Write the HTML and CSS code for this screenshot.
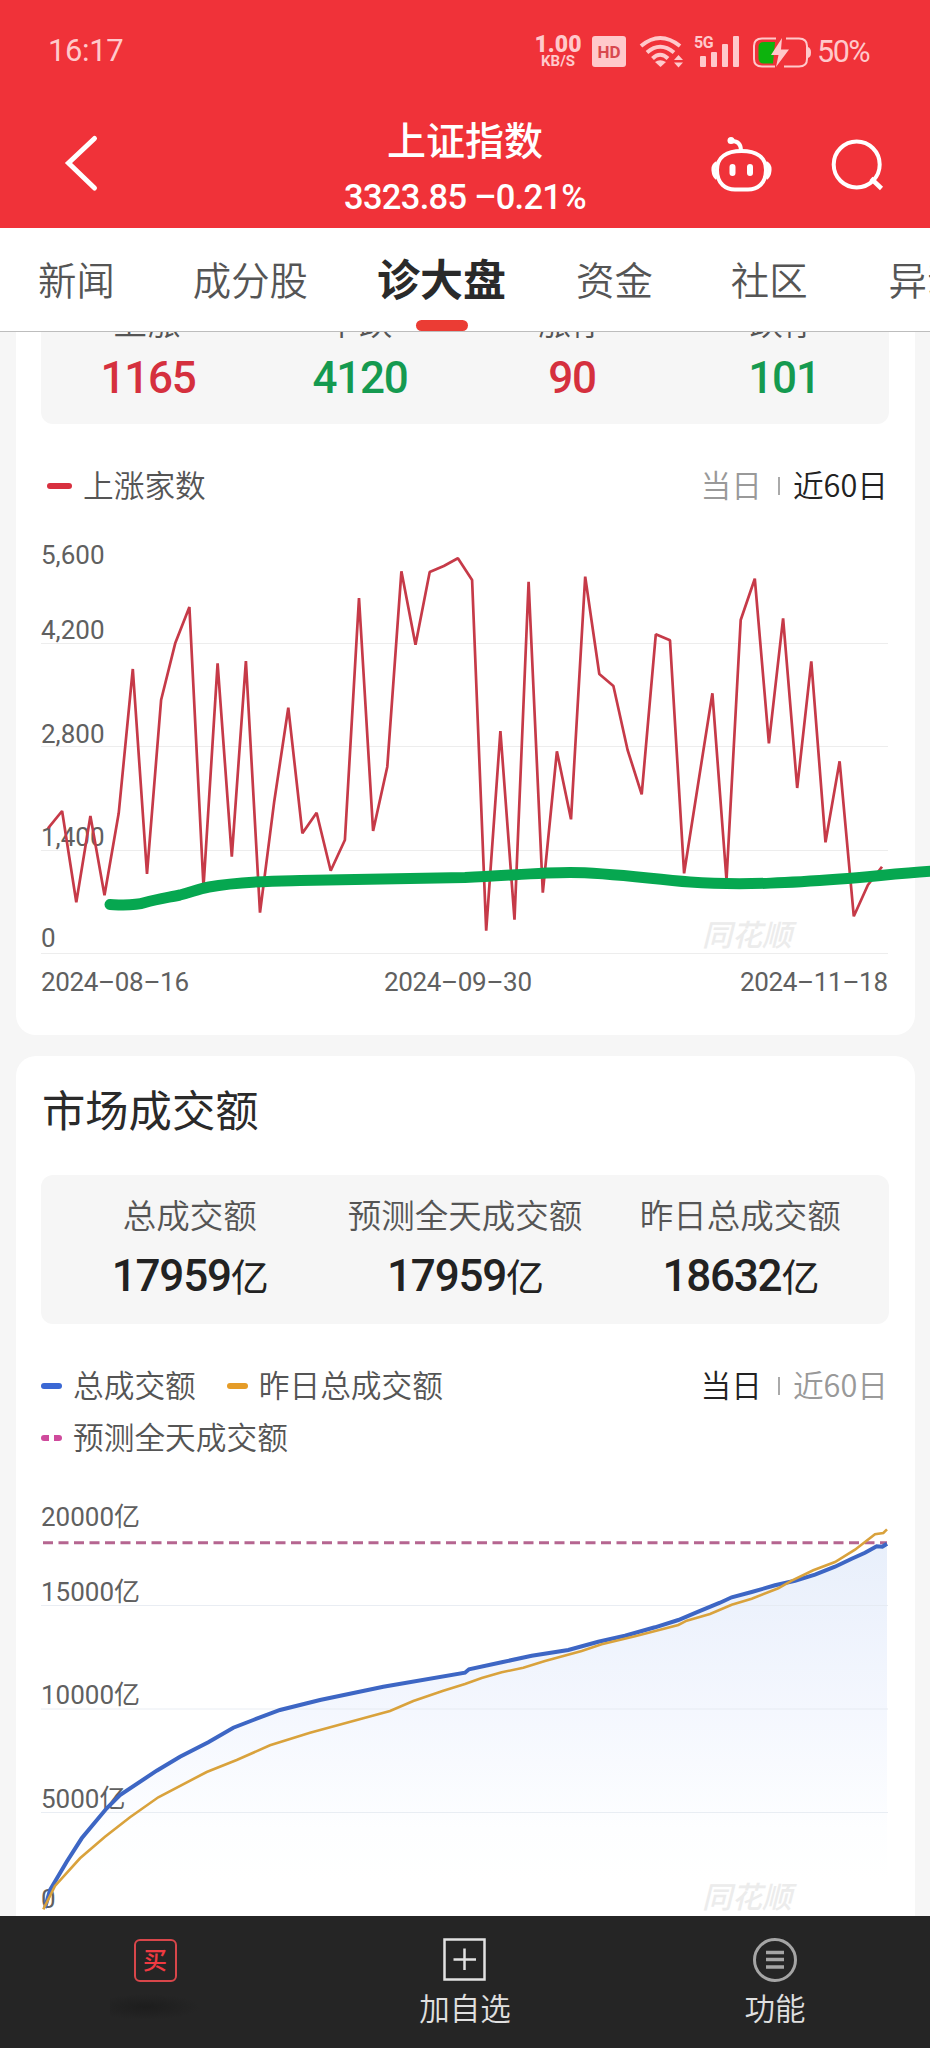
FILE: index.html
```html
<!DOCTYPE html>
<html lang="zh-CN">
<head>
    <meta charset="UTF-8">
    <meta name="viewport" content="width=device-width, initial-scale=1.0">
    <title>上证指数</title>
    <link rel="stylesheet" href="styles.css">
</head>
<body>
    <header>
        <div class="status">
            <span class="time">16:17</span>
            <div class="speed"><b>1.00</b><span>KB/S</span></div>
            <span class="hd">HD</span>
            <svg class="wifi" width="46" height="34" viewBox="638 34 46 34">
                <g fill="none" stroke="#ffc9cb" stroke-width="4">
                    <path d="M641 45Q660 29 680 45"/>
                    <path d="M647 51.5Q660 40 674 51.5"/>
                    <path d="M652.500 57.500Q660 50 668 57.500"/>
                </g>
                <path d="M655 61Q660 57.500 666 61L660.500 66Z" fill="#ffc9cb"/>
                <path d="M674 59L678.500 54L683 59ZM674 61.500L678.500 66.500L683 61.500Z" fill="#ffc9cb"/>
            </svg>
            <div class="signal">
                <span>5G</span>
                <svg width="42" height="34" viewBox="698 34 42 34" fill="#ffc9cb">
                    <rect x="700" y="55" width="6" height="11" rx="1"/>
                    <rect x="711" y="51" width="6" height="15" rx="1"/>
                    <rect x="722" y="43" width="6" height="23" rx="1"/>
                    <rect x="733" y="35" width="6" height="31" rx="1"/>
                </svg>
            </div>
            <svg class="battery" width="60" height="34" viewBox="752 34 60 34">
                <path d="M775 41H764Q758.500 41 758.500 46V57Q758.500 62.500 764 62.500H773Z" fill="#0db30d"/>
                <path d="M776 37.500H762Q754 37.500 754 45V58Q754 65.500 762 65.500H775M786 37.500H799Q807 37.500 807 45V58Q807 65.500 799 65.500H784" fill="none" stroke="#ffc9cb" stroke-width="2"/>
                <path d="M808 46Q811 47 811 51.500T808 57Z" fill="#ffc9cb"/>
                <path d="M782 37L771 54H778.500L776 66L789 48.500H781Z" fill="#ffc9cb"/>
            </svg>
            <span class="percent">50%</span>
        </div>
        <div class="nav">
            <svg class="back" width="40" height="60" viewBox="62 133 40 60">
                <path d="M94.500 138.500L68.500 163L94.500 188" fill="none" stroke="#fff" stroke-width="5" stroke-linecap="round"/>
            </svg>
            <div class="title">
                <h1>上证指数</h1>
                <p>3323.85 <span>–0.21%</span></p>
            </div>
            <svg class="robot" width="64" height="60" viewBox="710 134 64 60" fill="none" stroke="#fff" stroke-width="4">
                <path d="M741.500 151C756 151 766 157 766 170C766 184 757 189.500 748 189.500H735C726 189.500 717 184 717 170C717 157 727 151 741.500 151Z"/>
                <path d="M717 163Q713 165 713.500 170.500T717 178M766 163Q770 165 769.500 170.500T766 178"/>
                <path d="M732 141Q740.500 141 741 150"/>
                <circle cx="731" cy="140.500" r="3.500" fill="#fff" stroke="none"/>
                <path d="M732.500 167V173M750 167V173" stroke-width="6" stroke-linecap="round"/>
            </svg>
            <svg class="search" width="60" height="60" viewBox="830 136 60 60" fill="none" stroke="#fff" stroke-width="4">
                <circle cx="856.700" cy="164.500" r="23"/>
                <path d="M871 178.500L881.500 188.500" stroke-width="4.500"/>
            </svg>
        </div>
    </header>

    <nav class="tabs">
        <a>新闻</a>
        <a>成分股</a>
        <a class="active">诊大盘</a>
        <a>资金</a>
        <a>社区</a>
        <a>异动</a>
    </nav>

    <main>
        <section class="card card-first">
            <div class="stats four">
                <div><label>上涨</label><strong class="red">1165</strong></div>
                <div><label>下跌</label><strong class="green">4120</strong></div>
                <div><label>涨停</label><strong class="red">90</strong></div>
                <div><label>跌停</label><strong class="green">101</strong></div>
            </div>
            <div class="chart-head">
                <div class="legend first">
                    <span class="item"><i class="mark rise"></i>上涨家数</span>
                </div>
                <div class="switch"><span>当日</span><i></i><span class="on">近60日</span></div>
            </div>
            <svg class="chart" width="930" height="500" viewBox="0 520 930 500">
                <g stroke="#ededed" stroke-width="1.200">
                    <path d="M41 643.500H888M41 746.500H888M41 850.500H888M41 953.500H888"/>
                </g>
                <text class="watermark" x="702" y="946" textLength="90">同花顺</text>
                <g class="axis">
                    <text x="41" y="564">5,600</text>
                    <text x="41" y="639">4,200</text>
                    <text x="41" y="742.500">2,800</text>
                    <text x="41" y="845.500">1,400</text>
                    <text x="41" y="946.500">0</text>
                    <text x="41" y="990.500" textLength="148">2024–08–16</text>
                    <text x="384" y="990.500" textLength="148">2024–09–30</text>
                    <text x="740" y="990.500" textLength="148">2024–11–18</text>
                </g>
                <polyline class="rise-line" points="48,828.3 62.1,811 76.3,902.3 90.4,816 104.5,895.3 118.7,813.3 132.8,669 147,874 161.1,700 175.2,643.3 189.4,607 203.5,887 217.6,663.3 231.8,856.7 245.9,661 260,912.7 274.2,801.7 288.3,707.7 302.4,833.3 316.6,812.7 330.7,870.7 344.9,840 359,598 373.1,831 387.3,766.7 401.4,571.3 415.5,644.7 429.7,572 443.8,566 457.9,558.3 472.1,580 486.2,930.7 500.4,731 514.5,919.7 528.6,581.7 542.8,892.7 556.9,751.3 571,819.3 585.2,576.7 599.3,674 613.4,686 627.6,750 641.7,794.3 655.8,634.3 670,640.3 684.1,873.3 698.3,782.7 712.4,693.3 726.5,880 740.7,620 754.8,578.7 768.9,743.3 783.1,618.3 797.2,788 811.3,661.3 825.5,842.3 839.6,761.3 853.8,916.3 867.9,885 882,866.7"/>
                <path class="brush" d="M110 904.500C122 905 134 906 145 902.500C157 899 168 897.500 180 895C192 892 198 889 209 887C240 881 275 881 300 880.500C360 879 420 878.500 465 877.500C510 875.500 540 872.500 570 872.500C610 872.500 650 879 690 882C745 886 800 882 840 879C870 877 900 873 935 871"/>
            </svg>
        </section>

        <section class="card">
            <h2>市场成交额</h2>
            <div class="stats three">
                <div><label>总成交额</label><strong>17959<em>亿</em></strong></div>
                <div><label>预测全天成交额</label><strong>17959<em>亿</em></strong></div>
                <div><label>昨日总成交额</label><strong>18632<em>亿</em></strong></div>
            </div>
            <div class="chart-head second">
                <div class="legend">
                    <span class="item"><i class="mark total"></i>总成交额</span>
                    <span class="item"><i class="mark yesterday"></i>昨日总成交额</span>
                    <span class="item"><i class="mark forecast"></i>预测全天成交额</span>
                </div>
                <div class="switch"><span class="on">当日</span><i></i><span>近60日</span></div>
            </div>
            <svg class="chart" width="930" height="436" viewBox="0 1480 930 436">
                <defs>
                    <linearGradient id="fill" x1="0" y1="1540" x2="0" y2="1880" gradientUnits="userSpaceOnUse">
                        <stop offset="0" stop-color="#e8effb"/>
                        <stop offset="0.500" stop-color="#f4f7fe"/>
                        <stop offset="0.850" stop-color="#fdfeff"/>
                        <stop offset="1" stop-color="#fff"/>
                    </linearGradient>
                </defs>
                <path fill="url(#fill)" d="M45 1908L50 1890L66.700 1861.700L81.700 1838.300L106.700 1808.300L120 1795L156.700 1770.700L180 1756.700L208.300 1742.300L233.300 1727.700L253.300 1720L280 1710L320 1700L383.300 1686.700L465 1671.700L501.700 1662.300L531.700 1655.700L568.300 1650L598.300 1641.700L625 1635.700L655 1627.300L678.300 1620L698.300 1611.700L731.700 1597.300L775 1585.300L815 1574.700L835 1566.700L865 1552.700L887 1543.700V1908Z"/>
                <path stroke="#e4e8f0" stroke-opacity=".8" stroke-width="1.200" d="M41 1605.500H888M41 1709H888M41 1812.500H888"/>
                <text class="watermark" x="702" y="1908" textLength="90">同花顺</text>
                <g class="axis">
                    <text x="41" y="1526">20000亿</text>
                    <text x="41" y="1601">15000亿</text>
                    <text x="41" y="1704">10000亿</text>
                    <text x="41" y="1807.500">5000亿</text>
                    <text x="41" y="1908">0</text>
                </g>
                <path class="forecast-line" d="M43 1542.700H887"/>
                <polyline class="total-line" points="45,1908 50,1890 66.7,1861.7 81.7,1838.3 106.7,1808.3 120,1795 156.7,1770.7 180,1756.7 208.3,1742.3 233.3,1727.7 253.3,1720 280,1710 320,1700 383.3,1686.7 465,1672.7 469,1669.3 501.7,1662.3 531.7,1655.7 568.3,1650 598.3,1641.7 625,1635.7 655,1627.3 678.3,1620 698.3,1611.7 720,1602.7 731.7,1597.3 751.7,1592 775,1585.3 795,1580.7 815,1574.7 835,1566.7 851.7,1558.7 865,1552.7 876.7,1546.3 882.3,1546.7 887,1543.7"/>
                <polyline class="yesterday-line" points="43.3,1909.3 55,1886 80,1858.3 105,1836.7 130,1817.3 158.3,1797.3 206.7,1772 236.7,1760 270,1745.3 310,1732.7 363.3,1718.3 390,1711 413.3,1701 443.3,1690.7 465,1684 481.7,1678 501.7,1672.3 523.3,1667.7 545,1661 581.7,1651 601.7,1644.3 635,1636.3 678.3,1625 686.7,1620.7 710,1614 731.7,1604.7 751.7,1598.7 778.3,1588.3 791.7,1580.7 813.3,1570.3 835,1562 855,1549.7 875,1534.3 883.3,1533 887,1529.3"/>
            </svg>
        </section>
    </main>

    <footer>
        <div class="buy"><span class="buy-icon">买</span><i class="smudge"></i></div>
        <div>
            <svg width="44" height="44" viewBox="0 0 44 44" fill="none" stroke="#e2e2e2" stroke-width="2.500">
                <rect x="1.500" y="1.500" width="40" height="40"/>
                <path d="M21.500 10.500V32M10.500 21.500H33"/>
            </svg>
            <span>加自选</span>
        </div>
        <div>
            <svg width="44" height="44" viewBox="0 0 44 44" fill="none" stroke="#a5a5a5">
                <circle cx="22" cy="22" r="20.500" stroke-width="3"/>
                <path d="M13 14.500H31M13 21.500H31M13 29H31" stroke-width="3.500"/>
            </svg>
            <span>功能</span>
        </div>
    </footer>
</body>
</html>
```
FILE: styles.css
```css
* {
    box-sizing: border-box;
}
body {
    margin: 0;
    width: 930px;
    height: 2048px;
    overflow: hidden;
    display: flex;
    flex-direction: column;
    font-family: "Noto Sans CJK SC", sans-serif;
    font-weight: 350;
    background-color: #f6f6f6;
    color: #333;
}
svg {
    display: block;
    flex-shrink: 0;
}
h1, h2, p {
    margin: 0;
}

/* red top bar */
header {
    flex: none;
    height: 228px;
    background-color: #f03239;
    color: #fff;
}
.status {
    height: 100px;
    display: flex;
    align-items: center;
    padding: 3px 56px 0 48px;
    color: #ffc9cb;
    font-family: Roboto, sans-serif;
}
.time {
    font-size: 31px;
    line-height: 36px;
    margin-right: auto;
    font-weight: 400;
    padding-bottom: 2px;
    letter-spacing: -0.4px;
}
.speed {
    width: 48px;
    display: flex;
    flex-direction: column;
    align-items: center;
    margin-right: 10px;
    font-weight: 700;
}
.speed b {
    font-size: 23px;
    line-height: 19px;
}
.speed span {
    font-size: 15px;
    line-height: 13px;
    margin-top: 1px;
}
.hd {
    width: 34px;
    height: 31px;
    line-height: 32px;
    border-radius: 3px;
    background-color: #ffc9cb;
    color: #d8484f;
    text-align: center;
    font-size: 17px;
    font-weight: 700;
    margin-right: 12px;
}
.wifi {
    margin-right: 14px;
}
.signal {
    position: relative;
    margin-right: 12px;
}
.signal span {
    position: absolute;
    left: -4px;
    top: 0;
    font-size: 16px;
    line-height: 15px;
    font-weight: 700;
    letter-spacing: -0.5px;
}
.battery {
    margin-right: 5px;
}
.percent {
    width: 57px;
    font-size: 30.5px;
    font-weight: 400;
    letter-spacing: -1.5px;
    white-space: nowrap;
}
.nav {
    height: 128px;
    display: flex;
    align-items: center;
    padding: 0 40px 0 62px;
}
.back {
    margin-top: -2px;
}
.title {
    margin-left: 213px;
    width: 300px;
    text-align: center;
}
h1 {
    font-size: 39px;
    line-height: 46px;
    font-weight: 500;
    margin-top: 3px;
}
.title p {
    font-family: Roboto, sans-serif;
    font-size: 34.5px;
    line-height: 40px;
    font-weight: 500;
    margin-top: 16px;
    letter-spacing: -0.7px;
}
.robot {
    margin-left: 95px;
}
.search {
    margin-left: 56px;
    margin-top: 4px;
}

/* tab strip */
.tabs {
    flex: none;
    height: 104px;
    display: flex;
    align-items: center;
    gap: 78px;
    padding-left: 38px;
    background-color: #fff;
    border-bottom: 1px solid #bdbdbd;
    overflow: hidden;
    white-space: nowrap;
}
.tabs a {
    font-size: 38.4px;
    color: #555;
    flex: none;
    padding-bottom: 4px;
}
.tabs a:last-child {
    margin-left: 3px;
}
.tabs .active {
    font-size: 43px;
    font-weight: 700;
    color: #2a2a2a;
    margin: 0 -8px 0 -9px;
    padding: 0;
    height: 103px;
    line-height: 99px;
    position: relative;
}
.tabs .active::after {
    content: "";
    position: absolute;
    left: 39px;
    bottom: 0;
    width: 52px;
    height: 11px;
    border-radius: 5.5px;
    background-color: #eb3c34;
}

main {
    height: 1584px;
    flex: none;
    padding: 0 15px 0 16px;
    overflow: hidden;
}
.card {
    background-color: #fff;
    border-radius: 20px;
    height: 900px;
}
.card-first {
    height: 703px;
    margin-bottom: 21px;
    border-radius: 0 0 20px 20px;
}
.chart {
    margin-left: -16px;
}

/* summary boxes */
.stats {
    margin: 0 26px 0 25px;
    display: grid;
    background-color: #f6f6f6;
    border-radius: 12px;
    text-align: center;
}
.stats label {
    display: block;
    font-size: 33.5px;
    line-height: 38px;
    color: #555;
}
.stats strong {
    display: block;
    font-family: Roboto, "Noto Sans CJK SC", sans-serif;
    font-size: 44px;
    line-height: 50px;
    font-weight: 500;
    letter-spacing: -1.2px;
    color: #222;
}
.stats em {
    font-style: normal;
    font-size: 38px;
    font-weight: 400;
}
.stats .red {
    color: #d5303e;
}
.stats .green {
    color: #159a50;
}
.four {
    grid-template-columns: repeat(4, 1fr);
    height: 92px;
    border-radius: 0 0 12px 12px;
}
.four label {
    margin-top: -30px;
}
.four strong {
    margin-top: 13px;
    padding-left: 2px;
}
.three {
    grid-template-columns: repeat(3, 1fr);
    padding: 20px 11px 0;
    height: 149px;
    margin-top: 33px;
}
.three strong {
    margin-top: 18px;
}
h2 {
    font-size: 43.3px;
    line-height: 60px;
    font-weight: 400;
    color: #2a2a2a;
    padding: 22px 0 4px 26px;
}

/* legend and period switch */
.chart-head {
    height: 96px;
    display: flex;
    justify-content: space-between;
    padding: 40px 27px 0 25px;
    font-size: 30.7px;
    line-height: 40px;
}
.second {
    height: 156px;
}
.legend {
    width: 440px;
    display: flex;
    flex-wrap: wrap;
    align-content: flex-start;
    column-gap: 31px;
    row-gap: 12px;
    color: #555;
}
.legend.first {
    padding-left: 6px;
}
.item {
    display: flex;
    align-items: center;
}
.mark {
    width: 21px;
    height: 6px;
    border-radius: 3px;
    margin: 3px 11px 0 0;
}
.rise {
    width: 25px;
    background-color: #d8303f;
}
.total {
    background-color: #3b68d4;
}
.yesterday {
    background-color: #e59c28;
}
.forecast {
    background: linear-gradient(to right, #cf4a9c 8px, #fff 8px, #fff 13px, #cf4a9c 13px);
}
.switch {
    display: flex;
    align-items: center;
    height: 40px;
    color: #999;
    white-space: nowrap;
}
.switch i {
    width: 2px;
    height: 18px;
    background-color: #aaa;
    margin: 3px 13px 0 16px;
}
.switch .on {
    color: #222;
}

/* charts */
.axis {
    font-family: Roboto, "Noto Sans CJK SC", sans-serif;
    font-size: 26px;
    font-weight: 400;
    fill: #606060;
}
.watermark {
    font-size: 30px;
    font-weight: 500;
    font-style: italic;
    fill: #ececec;
}
.rise-line {
    fill: none;
    stroke: #c63a48;
    stroke-width: 2.7;
    stroke-linejoin: bevel;
}
.brush {
    fill: none;
    stroke: #06a750;
    stroke-width: 11;
    stroke-linecap: round;
}
.forecast-line {
    stroke: #b56590;
    stroke-width: 3;
    stroke-dasharray: 10 5.5;
}
.total-line {
    fill: none;
    stroke: #3d66c4;
    stroke-width: 4;
}
.yesterday-line {
    fill: none;
    stroke: #d9a23c;
    stroke-width: 2.6;
}

footer {
    flex: none;
    height: 132px;
    background-color: #252525;
    display: grid;
    grid-template-columns: repeat(3, 1fr);
    color: #e0e0e0;
}
footer div {
    display: flex;
    flex-direction: column;
    align-items: center;
    padding-top: 22px;
}
footer div > span {
    font-size: 30.5px;
    line-height: 40px;
    margin-top: 5px;
}
footer .buy-icon {
    width: 43px;
    height: 43px;
    border: 2.5px solid #d8464a;
    border-radius: 6px;
    color: #f03a42;
    font-size: 24px;
    line-height: 36px;
    text-align: center;
    font-weight: 500;
    margin-top: 1px;
}
.smudge {
    width: 90px;
    height: 26px;
    margin-top: 12px;
    background: radial-gradient(ellipse at 40% 50%, #1d1d1d, #252525 70%);
}
```
